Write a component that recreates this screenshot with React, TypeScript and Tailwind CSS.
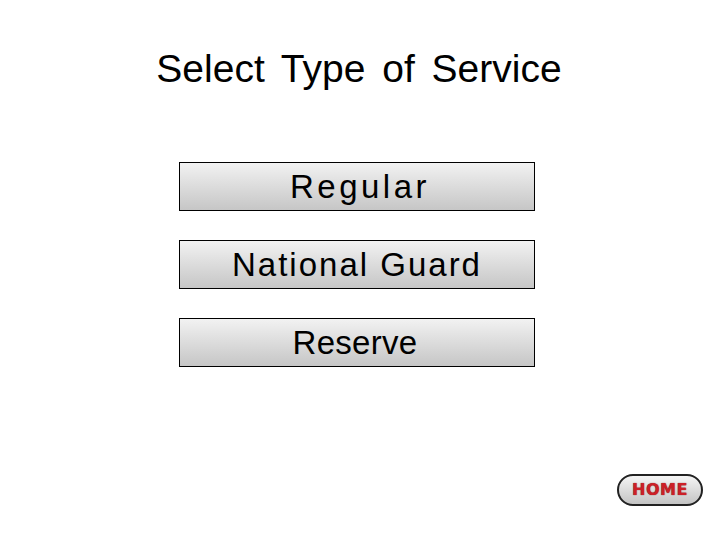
const options = [
  { label: "Regular", spacing: "tracking-[3.5px] pl-[6px]" },
  { label: "National Guard", spacing: "tracking-[2px]" },
  { label: "Reserve", spacing: "tracking-[0.3px] pr-[4px]" },
];

export default function App() {
  return (
    <div className="w-[720px] h-[540px] bg-white flex flex-col items-center font-['Liberation_Sans',Arial,sans-serif] text-black">
      <h1 className="mt-[49px] mr-[2px] text-[39px] leading-none [word-spacing:6px]">Select Type of Service</h1>
      <div className="mt-[74px] mr-[6px] flex flex-col gap-[29px]">
        {options.map((o) => (
          <button
            key={o.label}
            className={`w-[356px] h-[49px] border border-black bg-gradient-to-b from-[#f2f2f2] to-[#c6c6c6] text-[33px] leading-none flex items-center justify-center ${o.spacing}`}
          >
            {o.label}
          </button>
        ))}
      </div>
      <div className="flex-1 w-full flex items-end justify-end pr-[17px] pb-[34px]">
        <button className="w-[86px] h-[32px] rounded-full border-2 border-[#222] bg-gradient-to-b from-[#f5f5f5] to-[#c4c4c4] text-[#cc1f27] font-bold text-[16px] leading-none tracking-[0.5px] font-['DejaVu_Sans',sans-serif] [text-shadow:0_0_1px_#6b0a0a]">
          HOME
        </button>
      </div>
    </div>
  );
}
